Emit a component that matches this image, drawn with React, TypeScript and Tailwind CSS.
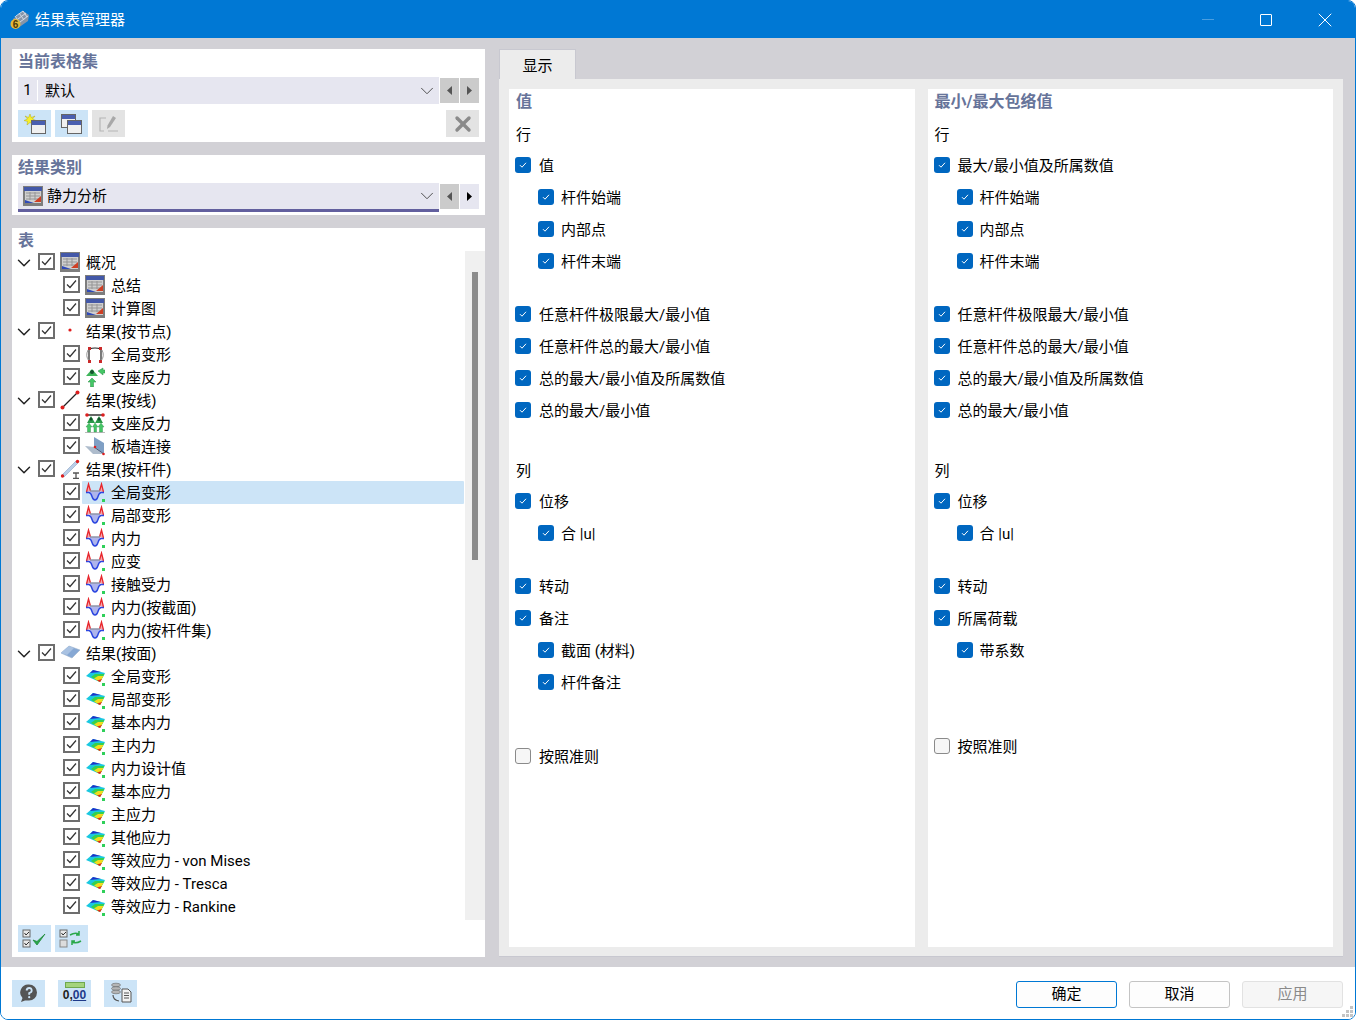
import { ChevronDown, X } from "lucide-react";

type TreeRow = {
  label: string;
  icon: keyof typeof treeIcons;
  parent?: boolean;
  selected?: boolean;
};

type OptionRow = {
  label?: string;
  kind?: "heading" | "text";
  sub?: boolean;
  off?: boolean;
  spacer?: string;
};

const TableIcon = () => (
  <svg width="20" height="20" viewBox="0 0 20 20">
    <rect x="0" y="0" width="20" height="20" fill="#7d7d7d" />
    <rect x="1" y="1" width="18" height="4" fill="#4358a8" />
    <rect x="2" y="5" width="16" height="12" fill="#cfcfcf" />
    <path d="M3 7h14M3 10h14M3 13h14M7 6v8M12 6v8" stroke="#959595" strokeWidth="1" />
    <path d="M18 10v6h-7z" fill="#cf3f24" />
    <path d="M2 17v-3l9 3z" fill="#2f49b8" />
  </svg>
);

const DotIcon = () => (
  <svg width="20" height="20" viewBox="0 0 20 20">
    <circle cx="10" cy="9" r="1.6" fill="#e01b1b" />
  </svg>
);

const NodeDeformIcon = () => (
  <svg width="20" height="20" viewBox="0 0 20 20">
    <path d="M4 17V5q6-2 12 0v12" fill="none" stroke="#222" strokeWidth="1.2" />
    <path d="M3 6q-3 6 1 11M17 6q3 6-1 11" fill="none" stroke="#999" strokeWidth="1" />
    <rect x="3" y="3" width="3" height="3" fill="#c92a2a" />
    <rect x="14" y="3" width="3" height="3" fill="#c92a2a" />
    <rect x="3" y="16" width="3" height="3" fill="#c92a2a" />
    <rect x="14" y="16" width="3" height="3" fill="#c92a2a" />
  </svg>
);

const NodeSupportIcon = () => (
  <svg width="20" height="20" viewBox="0 0 20 20">
    <path d="M7 2 1 9h12z" fill="#3fb55b" />
    <circle cx="7" cy="5" r="2" fill="#14532d" />
    <path d="M7 11 3 15h2.500v5h3v-5H11z" fill="#45c766" stroke="#2a8a46" strokeWidth=".5" />
    <path d="m13 4 5-3v2h2v3h-2v2z" fill="#45c766" stroke="#2a8a46" strokeWidth=".5" />
  </svg>
);

const LineIcon = () => (
  <svg width="20" height="20" viewBox="0 0 20 20">
    <path d="M2.500 17.500 17.500 2.500" stroke="#222" strokeWidth="1.2" />
    <circle cx="2.500" cy="17.500" r="2" fill="#dc1f1f" />
    <circle cx="17.500" cy="2.500" r="2" fill="#dc1f1f" />
  </svg>
);

const LineSupportIcon = () => (
  <svg width="20" height="20" viewBox="0 0 20 20">
    <path d="M1 2h18" stroke="#333" strokeWidth="1.5" />
    <circle cx="2" cy="2" r="1.800" fill="#dc1f1f" />
    <circle cx="18" cy="2" r="1.800" fill="#dc1f1f" />
    <path d="M6 3 2 10h8zM14 3l-4 7h8z" fill="#2a9a49" />
    <circle cx="6" cy="6" r="1.500" fill="#14532d" />
    <circle cx="14" cy="6" r="1.500" fill="#14532d" />
    <path d="M1 14h1.500v5h3v-5H7l-3-4zM7.500 14H9v5h2.500v-5H13l-3-4zM13 14h1.500v5h3v-5H19l-3-4z" fill="#45c766" stroke="#2a8a46" strokeWidth=".4" />
    <path d="M0 20h20" stroke="#777" strokeWidth="1" />
  </svg>
);

const WallIcon = () => (
  <svg width="20" height="20" viewBox="0 0 20 20">
    <path d="M9 1 19 7v11L9 11z" fill="#7f9fc4" />
    <path d="M0 10l10 1 9 7H8z" fill="#aebccc" />
    <path d="M9 11 19 18" stroke="#4a5a78" strokeWidth="1" />
    <circle cx="10" cy="11" r="1.300" fill="#dc1f1f" />
    <circle cx="18.500" cy="18" r="1.300" fill="#dc1f1f" />
  </svg>
);

const MemberIcon = () => (
  <svg width="20" height="20" viewBox="0 0 20 20">
    <path d="M2 16 16 2l2 2L4 18z" fill="#b9cfe8" stroke="#8aa3c4" strokeWidth=".6" />
    <circle cx="2.500" cy="17" r="1.700" fill="#dc1f1f" />
    <circle cx="17.500" cy="2.500" r="1.700" fill="#dc1f1f" />
    <path d="M13 14h6M13 19.500h6M16 14v5.500" stroke="#555" strokeWidth="1.300" />
  </svg>
);

const DiagramIcon = () => (
  <svg width="20" height="20" viewBox="0 0 20 20">
    <path d="M5 9h10q-1.500 8-5 8T5 9z" fill="#aeb4ec" />
    <path d="M1.500 10 3.500 2 5.500 9M18.500 10 16.500 2 14.500 9" fill="#f2a8ae" stroke="#e8262c" strokeWidth="1.300" />
    <path d="M5 9h10" stroke="#8f94a8" strokeWidth="1.500" />
    <path d="M1 10.500h3q2 .5 3 4t3 3.500 3-3.500 3-4h3" fill="none" stroke="#2c46e0" strokeWidth="1.400" />
    <rect x="17" y="17" width="3" height="3" fill="#2fd05a" />
  </svg>
);

const PlaneIcon = () => (
  <svg width="20" height="20" viewBox="0 0 20 20">
    <path d="M1 10 9 3l11 4-8 8z" fill="#86a8d4" stroke="#9fb4cc" strokeWidth=".6" />
    <path d="M1 10 9 3l5 2-7 7z" fill="#a9c2e2" />
  </svg>
);

const SurfaceIcon = () => (
  <svg width="20" height="20" viewBox="0 0 20 20">
    <path d="M1 10 8 4l12 3-5 9z" fill="#19c8e0" />
    <path d="M5 7 8 4l8 2-6 .5z" fill="#2030c8" />
    <path d="M6 11 10 8h9.500L15 16z" fill="#35d14e" />
    <path d="M9 12.500 13 10h5.500L15 16z" fill="#f2dc1c" />
    <path d="m12 14.500 5-1.500-2 3z" fill="#e0281c" />
    <rect x="17" y="17" width="3" height="3" fill="#2fd05a" />
  </svg>
);

const treeIcons = {
  table: TableIcon,
  dot: DotIcon,
  nodeDeform: NodeDeformIcon,
  nodeSupport: NodeSupportIcon,
  line: LineIcon,
  lineSupport: LineSupportIcon,
  wall: WallIcon,
  member: MemberIcon,
  diagram: DiagramIcon,
  plane: PlaneIcon,
  surface: SurfaceIcon,
};

const treeRows: TreeRow[] = [
  { label: "概况", icon: "table", parent: true },
  { label: "总结", icon: "table" },
  { label: "计算图", icon: "table" },
  { label: "结果(按节点)", icon: "dot", parent: true },
  { label: "全局变形", icon: "nodeDeform" },
  { label: "支座反力", icon: "nodeSupport" },
  { label: "结果(按线)", icon: "line", parent: true },
  { label: "支座反力", icon: "lineSupport" },
  { label: "板墙连接", icon: "wall" },
  { label: "结果(按杆件)", icon: "member", parent: true },
  { label: "全局变形", icon: "diagram", selected: true },
  { label: "局部变形", icon: "diagram" },
  { label: "内力", icon: "diagram" },
  { label: "应变", icon: "diagram" },
  { label: "接触受力", icon: "diagram" },
  { label: "内力(按截面)", icon: "diagram" },
  { label: "内力(按杆件集)", icon: "diagram" },
  { label: "结果(按面)", icon: "plane", parent: true },
  { label: "全局变形", icon: "surface" },
  { label: "局部变形", icon: "surface" },
  { label: "基本内力", icon: "surface" },
  { label: "主内力", icon: "surface" },
  { label: "内力设计值", icon: "surface" },
  { label: "基本应力", icon: "surface" },
  { label: "主应力", icon: "surface" },
  { label: "其他应力", icon: "surface" },
  { label: "等效应力 - von Mises", icon: "surface" },
  { label: "等效应力 - Tresca", icon: "surface" },
  { label: "等效应力 - Rankine", icon: "surface" },
];

const sharedRows: OptionRow[] = [
  { label: "杆件始端", sub: true },
  { label: "内部点", sub: true },
  { label: "杆件末端", sub: true },
  { spacer: "h-[21px]" },
  { label: "任意杆件极限最大/最小值" },
  { label: "任意杆件总的最大/最小值" },
  { label: "总的最大/最小值及所属数值" },
  { label: "总的最大/最小值" },
  { spacer: "h-[30px]" },
  { label: "列", kind: "text" },
  { label: "位移" },
  { label: "合 |u|", sub: true },
  { spacer: "h-[21px]" },
  { label: "转动" },
];

const leftRows: OptionRow[] = [
  { label: "值", kind: "heading" },
  { spacer: "h-[7px]" },
  { label: "行", kind: "text" },
  { label: "值" },
  ...sharedRows,
  { label: "备注" },
  { label: "截面 (材料)", sub: true },
  { label: "杆件备注", sub: true },
  { spacer: "h-[42px]" },
  { label: "按照准则", off: true },
];

const rightRows: OptionRow[] = [
  { label: "最小/最大包络值", kind: "heading" },
  { spacer: "h-[7px]" },
  { label: "行", kind: "text" },
  { label: "最大/最小值及所属数值" },
  ...sharedRows,
  { label: "所属荷载" },
  { label: "带系数", sub: true },
  { spacer: "h-[64px]" },
  { label: "按照准则", off: true },
];

const ToolButton = ({ children, muted }: { children: React.ReactNode; muted?: boolean }) => (
  <div className={`flex h-[27px] w-[33px] items-center justify-center ${muted ? "bg-[#e3e3e3]" : "bg-[#cce4f7]"}`}>
    {children}
  </div>
);

const NavArrows = ({ rightActive }: { rightActive?: boolean }) => (
  <div className="ml-px mt-px flex gap-px">
    <div className="flex h-[25px] w-[19px] items-center justify-center bg-[#cbcbcb]">
      <svg width="6" height="9" viewBox="0 0 6 9"><path d="M5 0v9L0 4.500z" fill="#555" /></svg>
    </div>
    <div className={`flex h-[25px] w-[19px] items-center justify-center ${rightActive ? "bg-[#e6e6f0]" : "bg-[#cbcbcb]"}`}>
      <svg width="6" height="9" viewBox="0 0 6 9"><path d="M0 0v9l5-4.500z" fill={rightActive ? "#000" : "#555"} /></svg>
    </div>
  </div>
);

const WindowIcon = ({ className }: { className: string }) => (
  <div className={`absolute h-[14px] w-[15px] border border-[#666] bg-[#f0f0f0] ${className}`}>
    <div className="h-[4px] bg-[#4a5fb0]" />
  </div>
);

const TreeItem = ({ row }: { row: TreeRow }) => {
  const Icon = treeIcons[row.icon];
  return (
    <div className="flex h-[23px] items-center">
      <div className="flex w-[26px] shrink-0 justify-center pr-[2px]">
        {row.parent && <ChevronDown size={22} strokeWidth={1.6} className="text-[#222]" />}
      </div>
      {!row.parent && <div className="w-[25px] shrink-0" />}
      <div className="mb-[2px] flex h-[17px] w-[17px] shrink-0 items-center justify-center border-2 border-[#6e6e6e] bg-white">
        <svg width="13" height="13" viewBox="0 0 13 13">
          <path d="m2 6.500 3 3 6-7" fill="none" stroke="#333" strokeWidth="1.200" />
        </svg>
      </div>
      <div className={`ml-[2px] flex h-[23px] flex-1 items-center rounded-[1px] pl-[3px] ${row.selected ? "bg-[#cce4f7]" : ""}`}>
        <div className="mb-[2px] h-[20px] w-[20px] shrink-0">
          <Icon />
        </div>
        <span className="ml-[6px] whitespace-nowrap pt-[2px] text-[15px] text-black">{row.label}</span>
      </div>
    </div>
  );
};

const OptionItem = ({ row }: { row: OptionRow }) => {
  if (row.spacer) {
    return <div className={row.spacer} />;
  }
  if (row.kind === "heading") {
    return <div className="flex h-[24px] items-center pl-px pt-[2px] text-[16px] font-bold text-[#67749a]">{row.label}</div>;
  }
  if (row.kind === "text") {
    return <div className="flex h-[29px] items-center pl-px pt-[2px] text-[15px] text-black">{row.label}</div>;
  }
  return (
    <div className={`flex h-[32px] items-center ${row.sub ? "pl-[23px]" : ""}`}>
      {row.off ? (
        <div className="h-[16px] w-[16px] rounded-[3px] border border-[#8a8a8a] bg-[#f6f6f6]" />
      ) : (
        <div className="flex h-[16px] w-[16px] items-center justify-center rounded-[3px] bg-[#0067c0]">
          <svg width="10" height="10" viewBox="0 0 10 10">
            <path d="m2 5.200 2 2 4-4.400" fill="none" stroke="#fff" strokeWidth="1" />
          </svg>
        </div>
      )}
      <span className={`whitespace-nowrap pt-[2px] text-[15px] text-black ${row.sub ? "ml-[7px]" : "ml-[8px]"}`}>{row.label}</span>
    </div>
  );
};

const OptionColumn = ({ rows }: { rows: OptionRow[] }) => (
  <div className="flex-1 bg-white pl-[6px]">
    {rows.map((row, index) => (
      <OptionItem key={index} row={row} />
    ))}
  </div>
);

export default function App() {
  return (
    <div className="h-[1020px] w-[1356px] overflow-hidden bg-white font-['Roboto','Noto_Sans_CJK_SC',sans-serif]">
      <div className="flex h-full flex-col overflow-hidden rounded-[8px] border border-[#0078d4]">
        <header className="flex h-[37px] shrink-0 items-center bg-[#0078d4] pl-[9px] text-white">
          <svg width="20" height="20" viewBox="0 0 20 20">
            <path d="M3 9 13 1l6 4-1 6-10 7z" fill="#8795a8" />
            <path d="M6 6l7-5M8 9l8-6M10 12l8-6M5 6l5 7M9 3l5 7M13 1l4 6" stroke="#d4dbe6" strokeWidth="1" />
            <circle cx="5.500" cy="14" r="5" fill="#e2b93b" />
            <text x="5.500" y="18" textAnchor="middle" fontSize="10" fontWeight="700" fill="#4a3708" fontFamily="Liberation Sans">6</text>
          </svg>
          <span className="ml-[5px] pt-[2px] text-[15px]">结果表管理器</span>
          <div className="ml-auto flex items-center">
            <div className="mr-[46px] h-px w-[12px] bg-[#4a9ee0]" />
            <div className="mr-[41px] h-[12px] w-[12px] rounded-[1px] border border-white" />
            <X size={24} strokeWidth={1} className="mr-[18px]" />
          </div>
        </header>

        <main className="flex h-[929px] shrink-0 gap-[14px] bg-[#d2d1d6] pl-[11px] pt-[11px]">
          <div className="flex w-[473px] flex-col gap-[13px]">
            <section className="h-[93px] bg-white px-[6px]">
              <div className="mb-[4px] flex h-[24px] items-center pt-[2px] text-[16px] font-bold text-[#67749a]">当前表格集</div>
              <div className="flex">
                <div className="flex h-[27px] w-[421px] items-center bg-[#e6e6f0]">
                  <span className="w-[20px] border-r border-white text-center text-[15px] leading-[21px]">1</span>
                  <span className="ml-[7px] pt-[2px] text-[15px]">默认</span>
                  <ChevronDown size={22} strokeWidth={1} className="ml-auto mr-px text-[#444]" />
                </div>
                <NavArrows />
              </div>
              <div className="mt-[6px] flex gap-[4px]">
                <ToolButton>
                  <div className="relative h-[20px] w-[22px]">
                    <svg className="absolute left-0 top-0" width="12" height="12" viewBox="0 0 12 12">
                      <path d="m6 0 1.300 3.500L11 2 8.500 5 12 6.500 8.500 7.500 9.500 11 6 8.500 3 11l.5-3.500L0 6.500 3.500 5 1 2l3.500 1.500z" fill="#f7ef2a" stroke="#a39a10" strokeWidth=".4" />
                    </svg>
                    <WindowIcon className="bottom-0 right-0" />
                  </div>
                </ToolButton>
                <ToolButton>
                  <div className="relative h-[20px] w-[21px]">
                    <WindowIcon className="left-0 top-0" />
                    <WindowIcon className="bottom-0 right-0" />
                  </div>
                </ToolButton>
                <ToolButton muted>
                  <svg width="20" height="20" viewBox="0 0 20 20">
                    <path d="M7 4H1v13h4M9 17h10" fill="none" stroke="#b5b5b5" strokeWidth="1.200" />
                    <path d="m14 2 3 2-6 9-3 2 .5-3.500z" fill="#a8a8a8" />
                  </svg>
                </ToolButton>
                <div className="ml-auto flex h-[27px] w-[33px] items-center justify-center bg-[#e3e3e3]">
                  <X size={24} strokeWidth={3.4} className="text-[#8a8a8a]" />
                </div>
              </div>
            </section>

            <section className="h-[60px] bg-white px-[6px]">
              <div className="mb-[4px] flex h-[24px] items-center pt-[2px] text-[16px] font-bold text-[#67749a]">结果类别</div>
              <div className="flex">
                <div className="flex h-[29px] w-[421px] items-center border-b-[3px] border-[#625f9e] bg-[#e6e6f0] pl-[5px]">
                  <TableIcon />
                  <span className="ml-[4px] text-[15px]">静力分析</span>
                  <ChevronDown size={22} strokeWidth={1} className="ml-auto mr-px text-[#444]" />
                </div>
                <NavArrows rightActive />
              </div>
            </section>

            <section className="relative flex h-[729px] flex-col bg-white">
              <div className="flex h-[23px] items-center px-[6px] pt-[2px] text-[16px] font-bold text-[#67749a]">表</div>
              <div className="flex h-[669px]">
                <div className="w-[453px] overflow-hidden pr-px">
                  {treeRows.map((row, index) => (
                    <TreeItem key={index} row={row} />
                  ))}
                </div>
                <div className="w-[20px] bg-[#f0f0f0] pl-[7px] pt-[21px]">
                  <div className="h-[288px] w-[6px] bg-[#8c8c8c]" />
                </div>
              </div>
              <div className="mt-[5px] flex gap-[4px] pl-[6px]">
                <ToolButton>
                  <svg width="26" height="22" viewBox="0 0 26 22">
                    <rect x="1" y="2" width="7" height="7" fill="#e8e8e8" stroke="#666" />
                    <rect x="1" y="12" width="7" height="7" fill="#e8e8e8" stroke="#666" />
                    <path d="m2.500 5 1.500 2 3-3M2.500 15l1.500 2 3-3" fill="none" stroke="#333" />
                    <path d="m11 12 4 5 8-11-8 7.500z" fill="#2aa84a" stroke="#1f8a3b" strokeWidth=".8" />
                  </svg>
                </ToolButton>
                <ToolButton>
                  <svg width="26" height="22" viewBox="0 0 26 22">
                    <rect x="1" y="2" width="7" height="7" fill="#e8e8e8" stroke="#666" />
                    <rect x="1" y="12" width="7" height="7" fill="#dcdcdc" stroke="#888" />
                    <path d="m2.500 5 1.500 2 3-3" fill="none" stroke="#333" />
                    <path d="M11 7q5-3 9-1M20 3v4h-3M22 13q-5 3-9 1M13 17v-4h3" fill="none" stroke="#2aa84a" strokeWidth="1.500" />
                  </svg>
                </ToolButton>
              </div>
            </section>
          </div>

          <div className="flex w-[844px] flex-col">
            <div className="flex h-[30px] w-[77px] items-center justify-center border-l border-r border-t border-[#c8c8d0] bg-[#ececec] pt-[3px] text-[15px]">显示</div>
            <div className="flex h-[878px] gap-[13px] border-b border-[#c8c8d0] bg-[#ececec] p-[10px] pb-[9px]">
              <OptionColumn rows={leftRows} />
              <OptionColumn rows={rightRows} />
            </div>
          </div>
        </main>

        <footer className="relative flex flex-1 items-center bg-white pl-[11px]">
          <div className="flex gap-[13px]">
            <ToolButton>
              <svg width="20" height="20" viewBox="0 0 20 20">
                <path d="M10 1.500a8 8 0 0 1 0 16H6L2 19l1.500-4A8 8 0 0 1 10 1.500z" fill="#555" />
                <path d="M7.500 7.500q.5-2.500 2.700-2.500t2.500 2.200-2.500 3v1.500" fill="none" stroke="#cce4f7" strokeWidth="1.800" />
                <circle cx="10.200" cy="14.200" r="1.100" fill="#cce4f7" />
              </svg>
            </ToolButton>
            <ToolButton>
              <div className="flex h-[22px] w-[22px] flex-col items-center">
                <div className="h-[6px] w-[20px] border border-[#6fa84f] bg-[#a4d47c]" />
                <span className="font-['Liberation_Sans',sans-serif] text-[12px] font-bold leading-[15px] text-[#222]">
                  0,<span className="text-[#1e3a8a] underline">00</span>
                </span>
              </div>
            </ToolButton>
            <ToolButton>
              <svg width="22" height="22" viewBox="0 0 22 22">
                <ellipse cx="6" cy="3" rx="4.500" ry="1.800" fill="#b5b5b5" stroke="#666" strokeWidth=".6" />
                <ellipse cx="6" cy="6.500" rx="4.500" ry="1.800" fill="#b5b5b5" stroke="#666" strokeWidth=".6" />
                <ellipse cx="6" cy="10" rx="4.500" ry="1.800" fill="#b5b5b5" stroke="#666" strokeWidth=".6" />
                <path d="M3 13q0 5 6 6" fill="none" stroke="#555" strokeWidth="1.200" />
                <path d="M12 7h6l3 3v10h-9z" fill="#f2f2f2" stroke="#555" />
                <path d="M14 11h5M14 13.500h5M14 16h5" stroke="#555" />
              </svg>
            </ToolButton>
          </div>
          <div className="ml-auto mr-[12px] mt-[2px] flex gap-[12px]">
            <div className="flex h-[27px] w-[101px] items-center justify-center rounded-[3px] border border-[#0078d4] bg-[#fdfdfd] text-[15px]">确定</div>
            <div className="flex h-[27px] w-[101px] items-center justify-center rounded-[3px] border border-[#c4c4c4] bg-[#fdfdfd] text-[15px]">取消</div>
            <div className="flex h-[27px] w-[101px] items-center justify-center rounded-[3px] border border-[#e2e2e2] bg-[#f6f6f6] text-[15px] text-[#8a8a8a]">应用</div>
          </div>
          <svg className="absolute bottom-[1px] right-[1px]" width="12" height="12" viewBox="0 0 12 12">
            <path d="M8 0h3v3H8zM4 4h3v3H4zM8 4h3v3H8zM0 8h3v3H0zM4 8h3v3H4zM8 8h3v3H8z" fill="#c4c4c4" />
          </svg>
        </footer>
      </div>
    </div>
  );
}
